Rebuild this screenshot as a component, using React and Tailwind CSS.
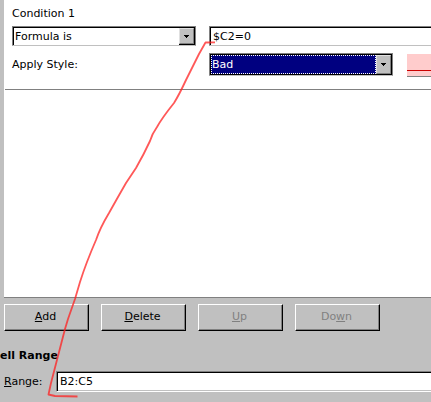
import { useState } from 'react';

function SelectArrow({ className }) {
    return (
        <span
            className={`pointer-events-none absolute flex w-[15px] items-center justify-center border border-t-[#e0e0e0] border-l-[#e0e0e0] border-r-[#808080] border-b-[#808080] bg-[#c0c0c0] ${className}`}
        >
            <svg width="5" height="3" viewBox="0 0 5 3" shapeRendering="crispEdges" aria-hidden="true">
                <path d="M0 0h5v1H0zM1 1h3v1H1zM2 2h1v1H2z" fill="#000" />
            </svg>
        </span>
    );
}

function PushButton({ before = '', hotkey, after, disabled = false }) {
    return (
        <button
            type="button"
            disabled={disabled}
            className="h-[27px] w-[85px] border border-t-white border-l-white border-r-black border-b-black bg-[#c0c0c0] pr-[2px] pb-px text-center leading-4 shadow-[inset_-1px_-1px_0_#808080] disabled:text-[#808080]"
        >
            {before}
            <span className="underline underline-offset-1">{hotkey}</span>
            {after}
        </button>
    );
}

// Hand-drawn line from the formula field to the range field
function Annotation() {
    return (
        <svg
            className="pointer-events-none absolute top-0 left-0"
            width="431"
            height="402"
            viewBox="0 0 431 402"
            fill="none"
            aria-hidden="true"
        >
            <path
                d="M215 42.3L205.5 42.5L199 54L186 80Q179 95 174 103Q162 118 157 127Q152 134 150 141Q144 154 136 168L126 183L118 197L109 213Q100 228 96 240Q86 263 80 282L75 299L68 319L65 329L58 356L51 383L48.5 394.5L55 396L77.5 396.5"
                stroke="#ff2020"
                strokeOpacity="0.75"
                strokeWidth="1.8"
                strokeLinejoin="round"
            />
        </svg>
    );
}

export default function App() {
    const [type, setType] = useState('formula');
    const [style, setStyle] = useState('bad');
    const [formula, setFormula] = useState('$C2=0');
    const [range, setRange] = useState('B2:C5');

    return (
        <div className="relative min-h-screen overflow-hidden bg-[#c0c0c0] font-['DejaVu_Sans',sans-serif] text-[11px] leading-4 text-black">
            {/* Conditions */}
            <section className="ml-1 min-h-[298px] border-b border-[#808080] bg-white">
                <div className="ml-px border-b border-[#808080] pt-[6px] pb-[13px] pl-[7px]">
                    <h2 className="mb-1">Condition 1</h2>

                    <div className="grid grid-cols-[184px_1fr] gap-x-[13px] gap-y-[7px]">
                        <div className="relative">
                            <select
                                aria-label="Condition type"
                                value={type}
                                onChange={(e) => setType(e.target.value)}
                                className="block h-5 w-full appearance-none border border-t-[#808080] border-l-[#808080] border-r-[#808080] border-b-[#c0c0c0] bg-white pt-[2px] pr-4 pl-[2px] leading-4 shadow-[inset_1px_1px_0_#000,inset_-1px_0_0_#000] outline-none"
                            >
                                <option value="formula">Formula is</option>
                                <option value="cell">Cell value is</option>
                            </select>
                            <SelectArrow className="top-[2px] right-[2px] bottom-[2px] shadow-[0_1px_0_#000]" />
                        </div>

                        <input
                            type="text"
                            aria-label="Formula"
                            value={formula}
                            onChange={(e) => setFormula(e.target.value)}
                            className="block h-5 w-full min-w-0 border border-r-0 border-t-[#808080] border-l-[#808080] border-b-[#c0c0c0] bg-white pl-[3px] leading-4 shadow-[inset_1px_1px_0_#000] outline-none"
                        />

                        <label htmlFor="style" className="pt-1">
                            Apply Style:
                        </label>

                        <div className="flex gap-[14px]">
                            <div className="relative w-[184px] shrink-0 border border-t-[#808080] border-l-[#808080] border-r-[#808080] border-b-[#c0c0c0] bg-black p-px">
                                <select
                                    id="style"
                                    value={style}
                                    onChange={(e) => setStyle(e.target.value)}
                                    className="block h-[19px] w-[165px] appearance-none border border-dotted border-white bg-[#000080] leading-4 text-white outline-none"
                                >
                                    <option value="bad">Bad</option>
                                    <option value="good">Good</option>
                                    <option value="neutral">Neutral</option>
                                </select>
                                <SelectArrow className="top-px right-px bottom-px" />
                            </div>

                            {/* Style preview */}
                            <div className="flex flex-1 flex-col pt-px">
                                <div className="flex-1 bg-[#ffcccc] pt-4">
                                    <div className="h-px bg-[#cc0000]" />
                                </div>
                                <div className="-mb-px h-px bg-[#808080]" />
                            </div>
                        </div>
                    </div>
                </div>
            </section>

            {/* Actions */}
            <div className="mt-[6px] ml-1 flex gap-3">
                <PushButton hotkey="A" after="dd" />
                <PushButton hotkey="D" after="elete" />
                <PushButton hotkey="U" after="p" disabled />
                <PushButton before="Do" hotkey="w" after="n" disabled />
            </div>

            {/* Cell range */}
            <section className="mt-[17px]">
                <h2 className="font-bold">ell Range</h2>
                <div className="mt-[7px] flex items-center pl-1">
                    <label htmlFor="range" className="w-[52px] shrink-0">
                        <span className="underline underline-offset-1">R</span>ange:
                    </label>
                    <input
                        id="range"
                        type="text"
                        value={range}
                        onChange={(e) => setRange(e.target.value)}
                        className="h-[21px] min-w-0 flex-1 border border-r-0 border-t-[#808080] border-l-[#808080] border-b-white bg-white pl-[3px] leading-4 shadow-[inset_1px_1px_0_#000,inset_0_-1px_0_#c0c0c0] outline-none"
                    />
                </div>
            </section>

            <Annotation />
        </div>
    );
}
